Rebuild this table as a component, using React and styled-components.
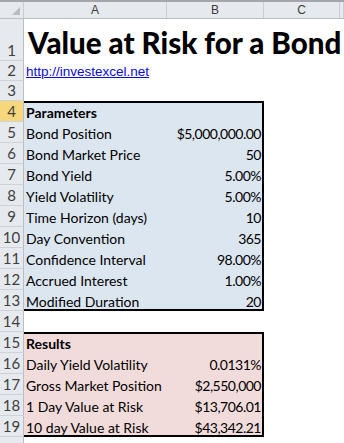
import React from 'react';
import styled, { createGlobalStyle } from 'styled-components';

const GlobalStyle = createGlobalStyle`
  body {
    margin: 0;
    background: #fff;
    font-family: Lato, "Open Sans", sans-serif;
  }
`;

const COLS = '24px 143px 97px 76px 1fr';

const Sheet = styled.div`
  width: 344px;
  height: 443px;
  overflow: hidden;
  border-top: 2px solid #a3a6ab;
`;

const HeaderRow = styled.div`
  display: grid;
  grid-template-columns: ${COLS};
  height: 16px;
  background: #e6e9ee;
  border-bottom: 1px solid #b9bec6;
`;

const ColHead = styled.div`
  display: flex;
  align-items: center;
  justify-content: center;
  border-right: 1px solid #c9cdd3;
  font-family: "Liberation Sans", Arial, sans-serif;
  font-size: 12px;
  color: #3c3c3c;
`;

const Corner = styled(ColHead)`
  position: relative;
  &::after {
    content: '';
    position: absolute;
    right: 3px;
    bottom: 3px;
    border-left: 8px solid transparent;
    border-bottom: 8px solid #b9bcc1;
  }
`;

const Row = styled.div`
  display: grid;
  grid-template-columns: ${COLS};
  height: ${(p) => p.$h}px;
`;

const RowHead = styled.div`
  display: flex;
  align-items: flex-end;
  justify-content: center;
  padding-bottom: 1px;
  box-sizing: border-box;
  background: ${(p) => (p.$active ? '#f7d77b' : '#e6e9ee')};
  border-right: 1px solid #b9bec6;
  border-bottom: 1px solid #cfd3d9;
  font-family: Lato, sans-serif;
  font-size: 15px;
  color: #404040;
`;

const Cell = styled.div`
  display: flex;
  align-items: flex-end;
  justify-content: ${(p) => (p.$num ? 'flex-end' : 'flex-start')};
  padding: 0 ${(p) => (p.$num ? '3px' : '2px')} 1px 2px;
  box-sizing: border-box;
  white-space: nowrap;
  background: ${(p) => p.$fill || 'transparent'};
  box-shadow: ${(p) =>
    [
      p.$top && 'inset 0 2px 0 #000',
      p.$bottom && 'inset 0 -2px 0 #000',
      p.$right && 'inset -2px 0 0 #000',
    ]
      .filter(Boolean)
      .join(', ') || 'none'};
  font-size: 14px;
  font-weight: ${(p) => (p.$bold ? 700 : 400)};
  letter-spacing: ${(p) => (p.$num ? '-0.5px' : '0')};
  color: #000;
`;

const Title = styled.div`
  font-size: 29.5px;
  font-weight: 900;
  line-height: 1;
  padding-bottom: 3px;
  padding-left: 2px;
  white-space: nowrap;
`;

const Link = styled.a`
  font-family: Arial, "Liberation Sans", sans-serif;
  font-size: 13.5px;
  color: #0b0bd6;
  text-decoration: underline;
  padding-bottom: 1px;
`;

const BLUE = '#dce6f1';
const PINK = '#f2dcdb';

const params = [
  ['Parameters', '', true],
  ['Bond Position', '$5,000,000.00'],
  ['Bond Market Price', '50'],
  ['Bond Yield', '5.00%'],
  ['Yield Volatility', '5.00%'],
  ['Time Horizon (days)', '10'],
  ['Day Convention', '365'],
  ['Confidence Interval', '98.00%'],
  ['Accrued Interest', '1.00%'],
  ['Modified Duration', '20'],
];

const results = [
  ['Results', '', true],
  ['Daily Yield Volatility', '0.0131%'],
  ['Gross Market Position', '$2,550,000'],
  ['1 Day Value at Risk', '$13,706.01'],
  ['10 day Value at Risk', '$43,342.21'],
];

function Block({ start, rows, fill }) {
  return rows.map(([label, value, bold], i) => {
    const top = i === 0;
    const bottom = i === rows.length - 1;
    return (
      <Row key={label} $h={21}>
        <RowHead $active={start + i === 4}>{start + i}</RowHead>
        <Cell $fill={fill} $top={top} $bottom={bottom} $bold={bold}>
          {label}
        </Cell>
        <Cell $fill={fill} $top={top} $bottom={bottom} $right $num>
          {value}
        </Cell>
        <Cell />
        <Cell />
      </Row>
    );
  });
}

function Blank({ n, h }) {
  return (
    <Row $h={h}>
      <RowHead>{n}</RowHead>
      <Cell />
      <Cell />
      <Cell />
      <Cell />
    </Row>
  );
}

export default function App() {
  return (
    <Sheet>
      <GlobalStyle />
      <HeaderRow>
        <Corner />
        <ColHead>A</ColHead>
        <ColHead>B</ColHead>
        <ColHead>C</ColHead>
        <ColHead />
      </HeaderRow>
      <Row $h={42}>
        <RowHead>1</RowHead>
        <Cell>
          <Title>Value at Risk for a Bond</Title>
        </Cell>
        <Cell />
        <Cell />
        <Cell />
      </Row>
      <Row $h={20}>
        <RowHead>2</RowHead>
        <Cell>
          <Link href="#">http://investexcel.net</Link>
        </Cell>
        <Cell />
        <Cell />
        <Cell />
      </Row>
      <Blank n={3} h={20} />
      <Block start={4} rows={params} fill={BLUE} />
      <Blank n={14} h={21} />
      <Block start={15} rows={results} fill={PINK} />
      <Blank n="" h={21} />
    </Sheet>
  );
}
